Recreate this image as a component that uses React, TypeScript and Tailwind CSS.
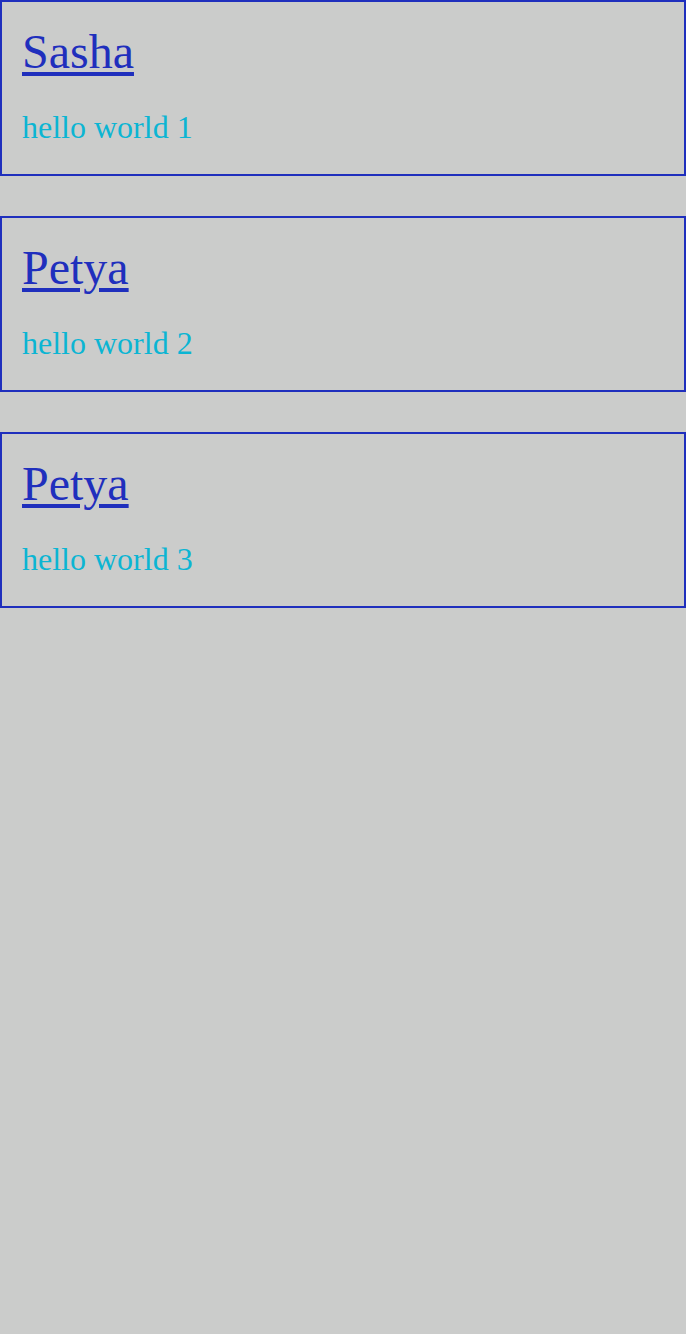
export default function App() {
  const posts = [
    { id: 1, author: 'Sasha', text: 'hello world 1' },
    { id: 2, author: 'Petya', text: 'hello world 2' },
    { id: 3, author: 'Petya', text: 'hello world 3' },
  ]

  return (
    <div className="min-h-[1334px] bg-[#cbcccb] font-['Liberation_Serif',serif]">
      <div className="flex flex-col gap-10">
        {posts.map((post) => (
          <div key={post.id} className="border-2 border-[#1f2fbd] px-5 pt-[23px] pb-[29px]">
            <a
              href="#"
              className="block w-fit text-[48px] leading-[53px] text-[#1f2fbd] underline decoration-[4px] underline-offset-[4px]"
            >
              {post.author}
            </a>
            <p className="mt-[32px] text-[32px] leading-[35px] text-[#0bb5d3]">{post.text}</p>
          </div>
        ))}
      </div>
    </div>
  )
}
